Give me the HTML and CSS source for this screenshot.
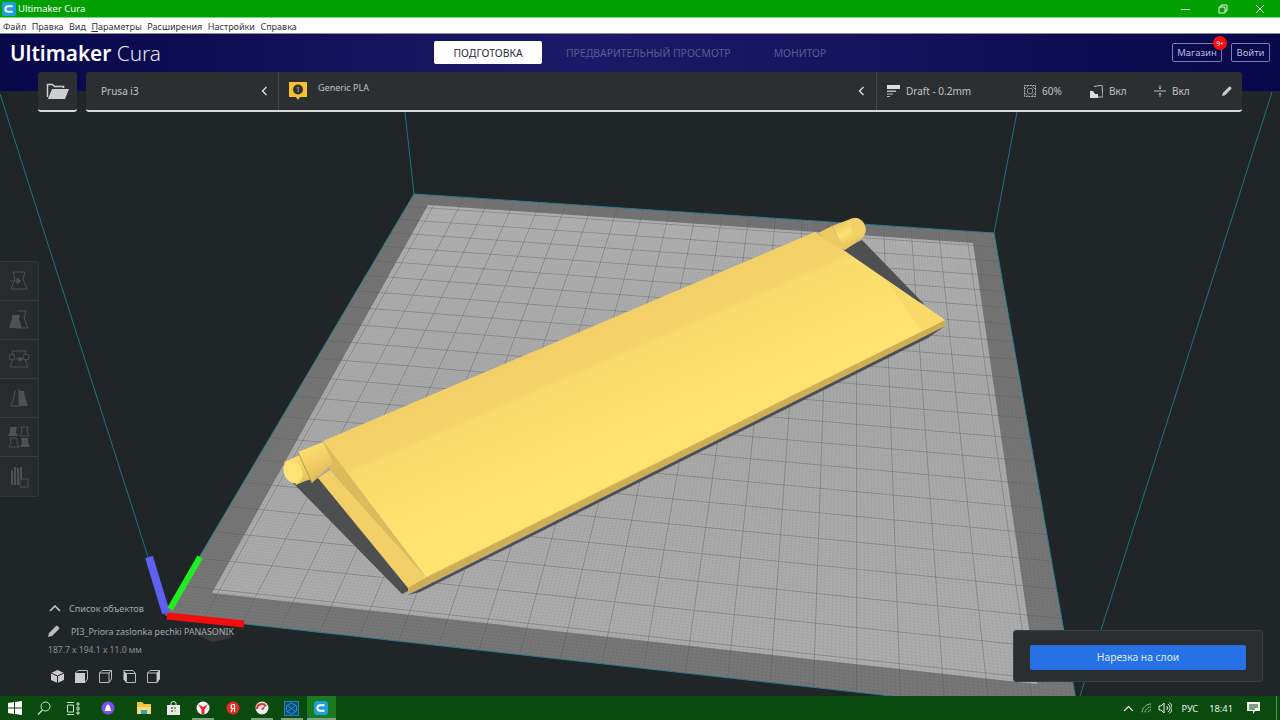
FILE: index.html
```html
<!DOCTYPE html>
<html lang="ru">
<head>
<meta charset="utf-8">
<title>Ultimaker Cura</title>
<link rel="stylesheet" href="styles.css">
</head>
<body>
<div class="window">
  <div class="titlebar">
    <svg class="app-icon" width="14" height="14" viewBox="0 0 14 14"><rect width="14" height="14" rx="2" fill="#1ba0dc"/><path d="M10.5 4.2H6.2a2.8 2.8 0 0 0 0 5.6h4.3" fill="none" stroke="#fff" stroke-width="2"/></svg>
    <span class="title-text">Ultimaker Cura</span>
    <div class="win-controls">
      <svg width="12" height="12" viewBox="0 0 12 12"><path d="M1 6.5h9" stroke="#e8f5e8" stroke-width="1"/></svg>
      <svg width="12" height="12" viewBox="0 0 12 12"><path d="M2 4h6v6H2zM4 4V2h6v6H8" fill="none" stroke="#e8f5e8" stroke-width="1"/></svg>
      <svg width="12" height="12" viewBox="0 0 12 12"><path d="M2 2l8 8M10 2l-8 8" stroke="#e8f5e8" stroke-width="1"/></svg>
    </div>
  </div>
  <nav class="menubar">
    <span>Файл</span><span>Правка</span><span>Вид</span><span><u>П</u>араметры</span><span>Расширения</span><span>Настройки</span><span>Справка</span>
  </nav>
  <main class="app">
    <svg class="viewport" width="1280" height="662" viewBox="0 34 1280 662">
      <defs>
        <linearGradient id="plate" gradientUnits="userSpaceOnUse" x1="570" y1="336" x2="680" y2="590">
          <stop offset="0" stop-color="#f3d067"/><stop offset=".13" stop-color="#f6d469"/><stop offset=".14" stop-color="#f9da6c"/><stop offset=".28" stop-color="#fcde6d"/><stop offset=".45" stop-color="#ffe370"/><stop offset="1" stop-color="#ffe16d"/>
        </linearGradient>
        <linearGradient id="inner" x1="0" y1="0" x2="0" y2="1">
          <stop offset="0" stop-color="#b5b5b5"/><stop offset=".4" stop-color="#ababab"/><stop offset="1" stop-color="#adadad"/>
        </linearGradient>
        <linearGradient id="cylL" gradientUnits="userSpaceOnUse" x1="300" y1="445" x2="320" y2="482">
          <stop offset="0" stop-color="#ffe273"/><stop offset=".5" stop-color="#f4d066"/><stop offset="1" stop-color="#d9b655"/>
        </linearGradient>
        <linearGradient id="cylR" gradientUnits="userSpaceOnUse" x1="840" y1="220" x2="856" y2="248">
          <stop offset="0" stop-color="#e8c660"/><stop offset=".45" stop-color="#ffe070"/><stop offset="1" stop-color="#dcb958"/>
        </linearGradient>
      </defs>
      <g class="wall-lines">
        <line x1="0" y1="94" x2="165" y2="610"/>
        <line x1="405" y1="112" x2="414" y2="194"/>
        <line x1="1017" y1="112" x2="994" y2="233"/>
        <line x1="1272" y1="92" x2="1080" y2="696"/>
      </g>
      <polygon class="bed-outer" points="414,194 994,233 1079,717 165,615"/>
      <polygon class="bed-inner" points="428,205 973,243 1037,684 212,593"/>
      <g id="bed-grid"></g>
      <polyline class="bed-edge" points="165,615 414,194 994,233 1079,717 165,615"/>
      <polygon class="shadow" points="293,483 320,478 410,590 402,594"/>
      <polygon class="shadow" points="843,250 862,240 925,305 895,290"/>
      <polygon class="shadow" points="408,595 945,326 928,338 420,592"/>
      <polygon class="shadow-soft" points="195,634 225,628 232,638 212,642"/>
      <polygon fill="#edca62" points="408,587 426,577 945,320"/>
      <polygon fill="#cfae53" points="408,587 945,320 945,326 408,594"/>
      <polygon fill="#f3d067" points="318,478 330,470 426,577 408,588"/>
      <polygon fill="#dcbb5a" points="323,441 426,577 330,470"/>
      <polygon fill="url(#plate)" points="323,441 815,232 842,249 945,320 426,577"/>
      <polygon fill="#fad96b" points="885,280 945,320 922,331"/>
      <polygon fill="url(#cylL)" points="298,452 323,442 333,463 312,483"/>
      <polygon fill="url(#cylL)" points="284,462 300,455 312,478 296,485"/>
      <line x1="298" y1="452" x2="312" y2="483" stroke="#b99a48" stroke-width="1"/>
      <ellipse cx="293" cy="472" rx="9" ry="11.5" transform="rotate(-28 293 472)" fill="#ffe374"/>
      <polygon fill="url(#cylR)" points="832,226 853,218 865,236 845,250"/>
      <polygon fill="#eccb63" points="818,233 832,226 845,250 836,247"/>
      <ellipse cx="858" cy="227" rx="7" ry="10" transform="rotate(-30 858 227)" fill="#f2d067"/>
      <line class="axis-blue" x1="149" y1="557" x2="166" y2="613"/>
      <line class="axis-green" x1="200" y1="557" x2="170" y2="609"/>
      <line class="axis-red" x1="167" y1="616" x2="244" y2="624"/>
    </svg>

    <header class="header">
      <div class="logo"><b>Ultimaker</b> Cura</div>
      <div class="tabs">
        <span class="tab active">ПОДГОТОВКА</span>
        <span class="tab preview">ПРЕДВАРИТЕЛЬНЫЙ ПРОСМОТР</span>
        <span class="tab">МОНИТОР</span>
      </div>
      <div class="account">
        <span class="outline-btn store">Магазин<span class="badge">9+</span></span>
        <span class="outline-btn login">Войти</span>
      </div>
    </header>

    <div class="toolbar">
      <div class="open-file panel">
        <svg width="23" height="18" viewBox="0 0 23 18"><path d="M1.500 15V2.500h5l2 2h9V6" fill="none" stroke="#cfcfcf" stroke-width="1.500"/><path d="M6 7h17l-4 10H2z" fill="#cfcfcf"/></svg>
      </div>
      <div class="config panel">
        <div class="printer"><span>Prusa i3</span><svg class="chev" width="7" height="10" viewBox="0 0 7 10"><path d="M5.5 1L1.5 5l4 4" fill="none" stroke="#ddd" stroke-width="1.4"/></svg></div>
        <div class="material">
          <svg class="mat-badge" width="20" height="20" viewBox="0 0 20 20"><path d="M1 1h18v15h-7l-2 3-2-3H1z" fill="#f6c12c"/><circle cx="10" cy="8.5" r="5" fill="#333"/><text x="10" y="11" text-anchor="middle" class="mat-num">1</text></svg>
          <span class="mat-name">Generic PLA</span>
          <svg class="chev" width="7" height="10" viewBox="0 0 7 10"><path d="M5.5 1L1.5 5l4 4" fill="none" stroke="#ddd" stroke-width="1.4"/></svg>
        </div>
        <div class="settings">
          <span class="setting draft"><svg width="13" height="12" viewBox="0 0 13 12"><path d="M0 0h13v4H0z" fill="#ddd"/><path d="M0 5.500h9v1.500H0zM0 8.500h6v1H0zM0 11h3v1H0z" fill="#bbb"/></svg>Draft - 0.2mm</span>
          <span class="setting infill"><svg width="12" height="12" viewBox="0 0 12 12"><rect x=".5" y=".5" width="11" height="11" fill="none" stroke="#b4b4b4" stroke-dasharray="2 .7"/><path d="M1 4L4 1M8 1l3 3M11 8l-3 3M4 11L1 8M4 3.500l4 0 .5.500 0 4-.5.500-4 0-.5-.5 0-4z" fill="none" stroke="#9a9a9a" stroke-width=".8"/></svg>60%</span>
          <span class="setting support"><svg width="13" height="13" viewBox="0 0 13 13"><path d="M4 1.500l8-1.500 1 12H7" fill="none" stroke="#bbb"/><path d="M0 6h3l2 3h3v4H0z" fill="#ddd"/></svg>Вкл</span>
          <span class="setting adhesion"><svg width="12" height="12" viewBox="0 0 12 12"><path d="M0 6h12" stroke="#bbb"/><path d="M6 0v4M4.500 2.500L6 4l1.500-1.500M6 12V8M4.500 9.500L6 8l1.500 1.500" fill="none" stroke="#aaa"/></svg>Вкл</span>
          <svg class="edit" width="10" height="10" viewBox="0 0 10 10"><path d="M0 10l.8-3L7 .8a1 1 0 0 1 1.400 0l.8.8a1 1 0 0 1 0 1.400L3 9.200z" fill="#ccc"/></svg>
        </div>
      </div>
    </div>

    <aside class="tools">
      <div class="tool"><svg width="20" height="20" viewBox="0 0 20 20"><path d="M4 1h12l-2 7 4 10H2l4-10z" fill="none" stroke="#4c5154"/><path d="M1 10h10M8 7.500l4 2.500-4 2.500z" fill="#4c5154" stroke="#4c5154"/></svg></div>
      <div class="tool"><svg width="20" height="20" viewBox="0 0 20 20"><path d="M8 1h9l-2 7 4 10H8" fill="none" stroke="#4c5154"/><path d="M3 5h8l-1 4 3 9H0l3-9z" fill="#4c5154"/></svg></div>
      <div class="tool"><svg width="22" height="20" viewBox="0 0 22 20"><path d="M4 2h14l-2 6 4 10H2l4-10z" fill="none" stroke="#4c5154"/><circle cx="4" cy="8" r="3" fill="#272b2e" stroke="#4c5154"/><circle cx="18" cy="8" r="3" fill="#272b2e" stroke="#4c5154"/><path d="M8 10h4M11 8l4 2-4 2z" fill="#4c5154" stroke="#4c5154"/></svg></div>
      <div class="tool"><svg width="20" height="20" viewBox="0 0 20 20"><path d="M7 3h-1l-1 6-3 9h8V1" fill="none" stroke="#4c5154"/><path d="M10 3h5l1 6 3 9h-9z" fill="#4c5154"/></svg></div>
      <div class="tool"><svg width="22" height="22" viewBox="0 0 22 22"><path d="M2 1h7l-1 5 2 4H0l2-4zM20 12h-7l1 5-2 4h10l-2-4z" fill="#4c5154"/><path d="M13 1h7l-1 5 2 4H12l2-4zM9 12H2l1 5-2 4h10l-2-4z" fill="none" stroke="#4c5154"/></svg></div>
      <div class="tool"><svg width="20" height="22" viewBox="0 0 20 22"><path d="M2 4h2v15H2zM5 1h2v18H5zM8 2h2v17H8zM11 1h2v12h-2z" fill="#4c5154"/><rect x="11" y="13" width="8" height="8" fill="none" stroke="#4c5154"/></svg></div>
    </aside>

    <div class="bottom">
      <section class="objects">
        <div class="obj-head"><svg width="12" height="7" viewBox="0 0 12 7"><path d="M1 6l5-5 5 5" fill="none" stroke="#ccc" stroke-width="1.500"/></svg><span>Список объектов</span></div>
        <div class="obj-name"><svg width="12" height="12" viewBox="0 0 12 12"><path d="M0 12l1-4 7-7a1 1 0 0 1 1.500 0L11 2.500a1 1 0 0 1 0 1.500l-7 7z" fill="#bbb"/></svg><span>PI3_Priora zaslonka pechki PANASONIK</span></div>
        <div class="obj-size">187.7 x 194.1 x 11.0 мм</div>
        <div class="view-btns">
          <svg width="13" height="13" viewBox="0 0 13 13"><path d="M6.500 0L13 3v7l-6.500 3L0 10V3z" fill="#ccc"/><path d="M0 3l6.500 3L13 3M6.500 6v7" fill="none" stroke="#222"/></svg>
          <svg width="13" height="13" viewBox="0 0 13 13"><path d="M3 .5h9.500V9L10 12.500H.5V3z" fill="none" stroke="#bbb"/><rect y="3" width="10" height="10" fill="#ccc"/></svg>
          <svg width="13" height="13" viewBox="0 0 13 13"><path d="M3 .5h9.500V9L10 12.500H.5V3zM.5 3H10v9.500M10 3l2.500-2.500" fill="none" stroke="#bbb"/></svg>
          <svg width="13" height="13" viewBox="0 0 13 13"><path d="M.5 .5l3 3v9.500L.5 9.500z" fill="#ccc"/><path d="M.5 .5H10l2.500 3V12.500H3.500V3.500H12.500" fill="none" stroke="#bbb"/></svg>
          <svg width="13" height="13" viewBox="0 0 13 13"><path d="M3 .5h9.500V9L10 12.500H.5V3zM.5 3H10v9.500M10 3l2.500-2.500" fill="none" stroke="#bbb"/><path d="M10 3l2.500-2.500V9L10 12.500z" fill="#ccc"/></svg>
        </div>
      </section>
      <section class="slice panel-flat">
        <button class="slice-btn" type="button">Нарезка на слои</button>
      </section>
    </div>
  </main>
  <footer class="taskbar">
    <div class="task-sys">
      <span class="task-item"><svg width="14" height="14" viewBox="0 0 14 14"><path d="M0 2l6-1v5.500H0zM7 .9L14 0v6.500H7zM0 7.500h6V13l-6-1zM7 7.500h7V14l-7-1z" fill="#fff"/></svg></span>
      <span class="task-item"><svg width="14" height="14" viewBox="0 0 14 14"><circle cx="8.500" cy="5.500" r="4.500" fill="none" stroke="#cfe0cf"/><path d="M5.500 9l-4.500 4.500" stroke="#cfe0cf" stroke-width="1.200"/></svg></span>
      <span class="task-item"><svg width="14" height="13" viewBox="0 0 14 13"><path d="M1 .5h7M1 12.500h7M1.500 3h6v7h-6zM11 1h2v2h-2zM11 5h2v3h-2zM11 10h2v2h-2z" fill="none" stroke="#cfe0cf"/></svg></span>
      <span class="task-item alice"><svg width="14" height="14" viewBox="0 0 14 14"><circle cx="7" cy="7" r="6.500" fill="#7a4ff0"/><path d="M3.500 10C5 8 5 3.500 7 3.500S9 8 10.500 10z" fill="#fff"/></svg></span>
    </div>
    <div class="task-apps">
      <span class="task-item"><svg width="14" height="12" viewBox="0 0 14 12"><path d="M0 0h5l2 2h7v10H0z" fill="#f3c742"/><path d="M0 5h14v7H0z" fill="#f8dc78"/><path d="M4 8h6v4H4z" fill="#2b9ed8"/></svg></span>
      <span class="task-item"><svg width="13" height="14" viewBox="0 0 13 14"><path d="M4 4V2.500a2.500 2 0 0 1 5 0V4" fill="none" stroke="#eee"/><path d="M0 4h13v10H0z" fill="#e9e9e9"/><path d="M4 6h2v2H4z" fill="#e55"/><path d="M7 6h2v2H7z" fill="#5b5"/><path d="M4 9h2v2H4z" fill="#39d"/><path d="M7 9h2v2H7z" fill="#ec3"/></svg></span>
      <span class="task-item marked"><svg width="14" height="14" viewBox="0 0 14 14"><circle cx="7" cy="7" r="6.500" fill="#fff"/><path d="M2 3l5 3 5-3-3.500 5.500V13h-3V8.500z" fill="#e22"/></svg></span>
      <span class="task-item"><svg width="14" height="14" viewBox="0 0 14 14"><circle cx="7" cy="7" r="6.500" fill="#e92a2a"/><path d="M8.500 3.500H7a2 2 0 0 0 0 4h1.500zM8.500 7.500V11M6.700 7.500L5 11" fill="none" stroke="#fff" stroke-width="1.100"/></svg></span>
      <span class="task-item marked"><svg width="14" height="14" viewBox="0 0 14 14"><circle cx="7" cy="7" r="6.500" fill="#eee"/><path d="M2 8a5 5 0 0 1 9-3" fill="none" stroke="#d33" stroke-width="2"/><path d="M6 8l5-4-3 5z" fill="#c22"/></svg></span>
      <span class="task-item marked"><svg width="15" height="15" viewBox="0 0 15 15"><rect x=".5" y=".5" width="14" height="14" fill="#0e4e7d" stroke="#1f7fb8"/><path d="M7.500 2l5 3v5l-5 3-5-3V5zM3 4l9 7M12 4l-9 7" fill="none" stroke="#3b9bd0" stroke-width=".8"/></svg></span>
      <span class="task-item marked active-app"><svg width="14" height="14" viewBox="0 0 14 14"><path d="M2 0h10l2 2v10l-2 2H2l-2-2V2z" fill="#1ba0dc"/><path d="M10.500 4.200H6.200a2.800 2.800 0 0 0 0 5.600h4.300" fill="none" stroke="#fff" stroke-width="2"/></svg></span>
    </div>
    <div class="tray">
      <svg class="tray-chev" width="11" height="7" viewBox="0 0 11 7"><path d="M1 6l4.500-4.500L10 6" fill="none" stroke="#eee" stroke-width="1.200"/></svg>
      <svg class="tray-wifi" width="11" height="11" viewBox="0 0 11 11"><path d="M10 1A9 9 0 0 0 1 10M10 4A6 6 0 0 0 4 10M10 7A3 3 0 0 0 7 10" fill="none" stroke="#cde0cd" stroke-dasharray="1.500 .8"/></svg>
      <svg class="tray-sound" width="14" height="12" viewBox="0 0 14 12"><path d="M1 4h2l3-3v10L3 8H1zM8.500 4a2.500 2.500 0 0 1 0 4M10 2a5 5 0 0 1 0 8M11.500 .5a7 7 0 0 1 0 11" fill="none" stroke="#e6f0e6"/></svg>
      <span class="tray-lang">РУС</span>
      <span class="tray-time">18:41</span>
      <svg class="tray-note" width="13" height="12" viewBox="0 0 13 12"><path d="M0 0h13v9H8l-2 3V9H0z" fill="#f4f4f4"/><path d="M2 3h9M2 5h9M2 7h6" stroke="#0b4a0f"/></svg>
      <span class="desktop-peek"></span>
    </div>
  </footer>
</div>
<script src="app.js"></script>
</body>
</html>
```

FILE: styles.css
```css
* { box-sizing: border-box; }
html, body { margin: 0; height: 100%; overflow: hidden; }
body { font-family: "Noto Sans", "Open Sans", sans-serif; }
.window { width: 1280px; height: 720px; display: flex; flex-direction: column; }

.titlebar { height: 18px; background: #02a002; display: flex; align-items: center; color: #fff; font-size: 9.5px; padding-left: 2px; border-bottom: 1px solid #7fd97f; }
.app-icon { flex: none; }
.title-text { margin-left: 2px; }
.win-controls { margin-left: auto; display: flex; gap: 25px; padding-right: 14px; }

.menubar { height: 16px; background: #fff; display: flex; align-items: center; gap: 5.5px; padding: 1px 0 0 3px; font-size: 9px; color: #333; border-bottom: 1px solid #8a8a9a; }

.app { flex: 1; position: relative; isolation: isolate; background: #202528; display: flex; flex-direction: column; color: #ddd; min-height: 0; }
.viewport { position: absolute; left: 0; top: 0; z-index: -1; }
.wall-lines line { stroke: #1f7585; stroke-width: 1; }
.bed-outer { fill: #777777; }
.bed-inner { fill: url(#inner); }
.bed-edge { fill: none; stroke: #2b7b8c; stroke-width: 1; }
.shadow { fill: #4e4f51; }
.shadow-soft { fill: #34383a; }
.minor { stroke: #000; stroke-opacity: .07; stroke-width: .6; }
.major { stroke: #555; stroke-opacity: .4; stroke-width: 1; }
.axis-blue { stroke: #5f5ff2; stroke-width: 8; }
.axis-green { stroke: #1fef1f; stroke-width: 6; }
.axis-red { stroke: #f30d0d; stroke-width: 7; }

.header { height: 57px; background: linear-gradient(90deg, #07074a 0%, #1a1a68 45%, #14145f 65%, #07074a 100%); display: grid; grid-template-columns: 434px 1fr auto; align-items: start; }
.logo { font-size: 20.8px; line-height: 28px; padding: 5px 0 0 10px; font-weight: 300; color: #e6e6ee; white-space: nowrap; }
.logo b { font-weight: 600; color: #fff; }
.tabs { display: flex; align-items: center; padding-top: 7px; font-size: 10.4px; color: #5c5c92; }
.tab { height: 23px; display: flex; align-items: center; justify-content: center; margin-right: 43px; }
.tab.active { width: 108px; margin-right: 24px; background: #fff; color: #2a2a38; border-radius: 2px; }
.account { display: flex; gap: 9px; padding: 9px 10px 0 0; }
.outline-btn { position: relative; height: 19px; border: 1px solid #7c7ab0; border-radius: 2px; font-size: 9.5px; color: #b8b8d8; display: flex; align-items: center; justify-content: center; }
.store { width: 50px; }
.login { width: 39px; }
.badge { position: absolute; right: -6px; top: -8px; width: 14px; height: 14px; border-radius: 50%; background: #f60d0d; color: #eee; font-size: 6.5px; display: flex; align-items: center; justify-content: center; }

.toolbar { display: flex; gap: 9px; height: 40px; margin-top: -19px; padding-left: 38px; padding-right: 38px; }
.panel { background: #2b2f32; border-bottom: 2px solid #d8d8d8; border-radius: 3px; }
.open-file { width: 39px; display: flex; align-items: center; justify-content: center; }
.config { flex: 1; display: flex; font-size: 10px; color: #c4c4c4; }
.printer { width: 193px; padding: 0 10px 0 15px; display: flex; align-items: center; justify-content: space-between; border-right: 1px solid #45494c; }
.material { width: 598px; padding: 0 11px 0 9px; display: flex; align-items: center; border-right: 1px solid #45494c; }
.mat-badge { flex: none; }
.mat-num { font-size: 7px; fill: #ccc; }
.mat-name { margin-left: 10px; font-size: 9px; align-self: flex-start; padding-top: 9px; }
.material .chev { margin-left: auto; }
.settings { flex: 1; display: flex; align-items: center; padding-left: 10px; }
.setting { display: flex; align-items: center; gap: 6px; }
.draft { width: 137px; }
.infill { width: 66px; }
.support { width: 64px; }
.adhesion { gap: 6px; }
.edit { margin-left: auto; margin-right: 10px; }

.tools { width: 39px; margin-top: 149px; background: #272b2e; border: 1px solid #33373a; border-left: 0; border-radius: 0 3px 3px 0; }
.tool { height: 39px; display: flex; align-items: center; justify-content: center; border-bottom: 1px solid #393d40; }
.tool:last-child { border-bottom: 0; }

.bottom { margin-top: auto; display: flex; justify-content: space-between; align-items: flex-end; padding: 0 17px 14px 48px; }
.objects { font-size: 8.55px; color: #a8a8a8; margin-bottom: -4px; }
.obj-head { display: flex; align-items: center; gap: 8px; height: 14px; font-size: 9.1px; padding-left: 1px; }
.obj-name { display: flex; align-items: center; gap: 11px; margin-top: 9px; height: 14px; font-size: 8.9px; }
.obj-size { margin-top: 6px; height: 13px; color: #8f9192; }
.view-btns { display: flex; gap: 11px; margin-top: 13px; margin-bottom: 3px; padding-left: 3px; }
.panel-flat { background: #2a2e31; border: 1px solid #3a3e41; border-radius: 3px; width: 250px; height: 52px; padding: 13px 16px; }
.slice-btn { width: 100%; height: 25px; background: #2671e6; border: 0; border-radius: 2px; color: #dfe9fb; font: 10.3px "Noto Sans", sans-serif; }

.taskbar { height: 24px; background: #0a4a0f; display: flex; align-items: center; }
.task-sys, .task-apps { display: flex; height: 100%; }
.task-apps { margin-left: 7px; }
.task-item { width: 29px; height: 100%; display: flex; align-items: center; justify-content: center; }
.task-apps .task-item { width: 29.6px; }
.alice { margin-left: 6px; }
.marked { background: linear-gradient(#7fa37f, #7fa37f) center bottom / 22px 2px no-repeat; }
.active-app { background: #197a20 linear-gradient(#7fa37f, #7fa37f) center bottom / 100% 2px no-repeat; }
.tray { margin-left: auto; height: 100%; display: flex; align-items: center; padding-right: 3px; color: #e8f2e8; font-size: 9.3px; }
.tray-wifi { margin-left: 7px; }
.tray-sound { margin-left: 6px; }
.tray-lang { margin-left: 9px; }
.tray-time { margin-left: 11px; }
.tray-note { margin-left: 14px; }
.desktop-peek { width: 1px; height: 100%; margin-left: 16px; background: #5f8f62; }
```

FILE: app.js
```js
// Draws the printer bed's 220 x 220 mm grid through a perspective mapping of the bed's four corners.
(function () {
  var tl = [414, 194], tr = [994, 233], br = [1079, 717], bl = [165, 615];
  var dx1 = tr[0] - br[0], dx2 = bl[0] - br[0], sx = tl[0] - tr[0] + br[0] - bl[0];
  var dy1 = tr[1] - br[1], dy2 = bl[1] - br[1], sy = tl[1] - tr[1] + br[1] - bl[1];
  var det = dx1 * dy2 - dx2 * dy1;
  var g = (sx * dy2 - dx2 * sy) / det, h = (dx1 * sy - sx * dy1) / det;
  var a = tr[0] - tl[0] + g * tr[0], b = bl[0] - tl[0] + h * bl[0];
  var d = tr[1] - tl[1] + g * tr[1], e = bl[1] - tl[1] + h * bl[1];
  function map(u, v) {
    var w = g * u + h * v + 1;
    return [(a * u + b * v + tl[0]) / w, (d * u + e * v + tl[1]) / w];
  }
  var root = document.getElementById('bed-grid');
  var NS = 'http://www.w3.org/2000/svg';
  function add(p, q, cls) {
    var l = document.createElementNS(NS, 'line');
    l.setAttribute('x1', p[0].toFixed(1)); l.setAttribute('y1', p[1].toFixed(1));
    l.setAttribute('x2', q[0].toFixed(1)); l.setAttribute('y2', q[1].toFixed(1));
    l.setAttribute('class', cls);
    root.appendChild(l);
  }
  for (var i = 1; i < 220; i++) {
    var t = i / 220, cls = i % 10 === 0 ? 'major' : 'minor';
    add(map(t, 0), map(t, 1), cls);
    add(map(0, t), map(1, t), cls);
  }
})();
```
